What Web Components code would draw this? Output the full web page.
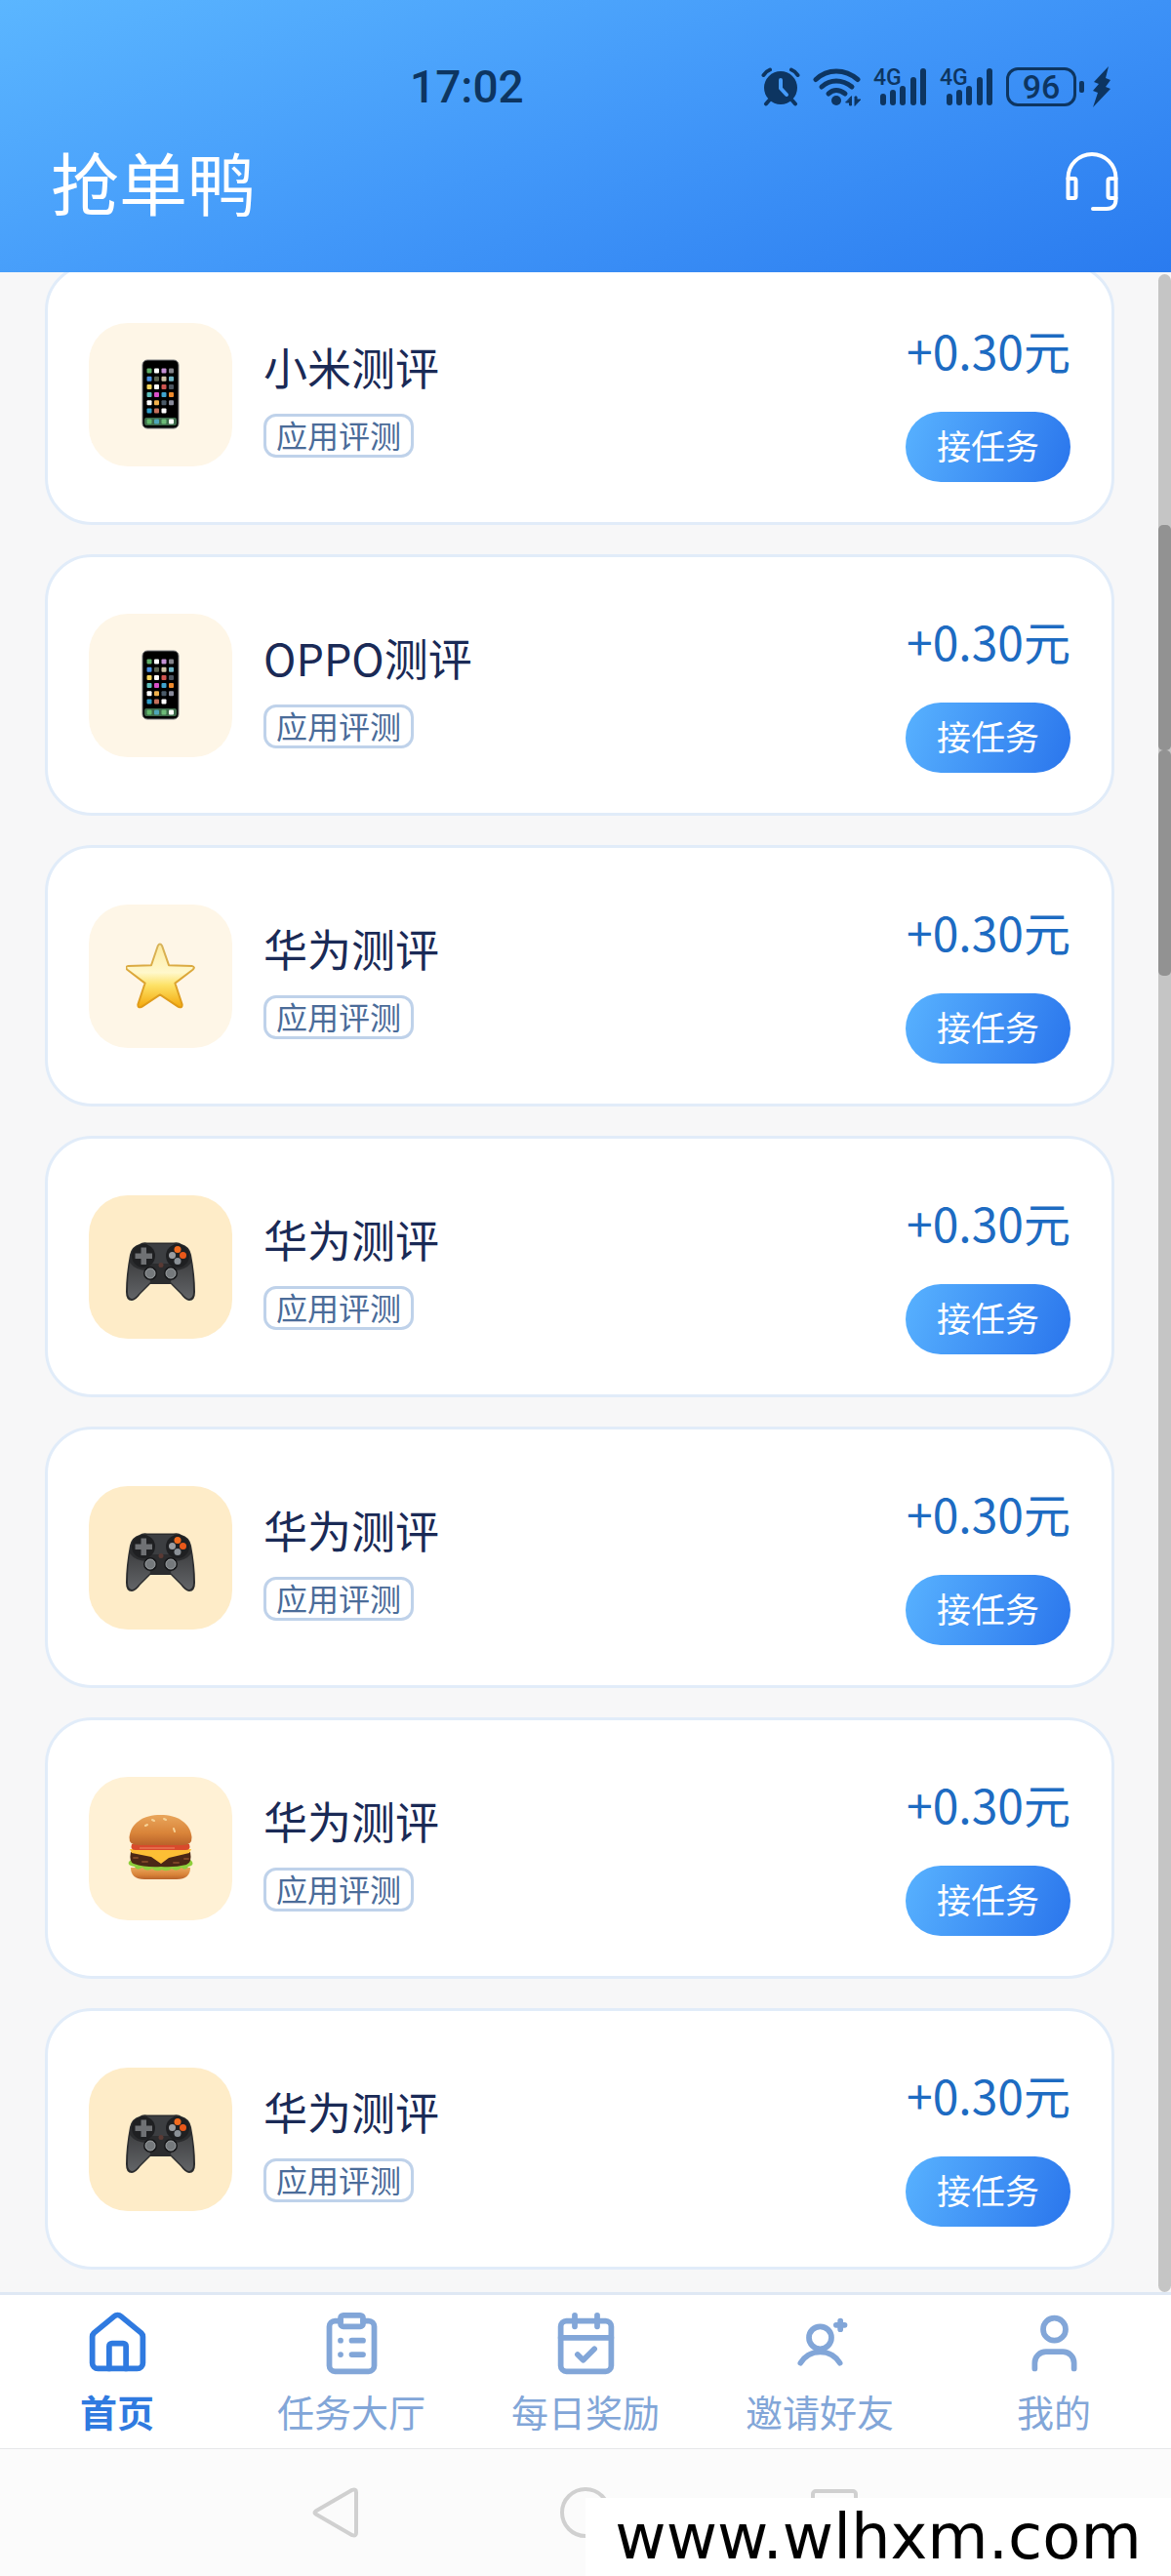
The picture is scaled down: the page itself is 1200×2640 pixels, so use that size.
<!DOCTYPE html>
<html lang="zh-CN">
<head>
<meta charset="utf-8">
<meta name="viewport" content="width=device-width, initial-scale=1">
<title>抢单鸭</title>
<style>
    body{
        margin: 0;
        background: #f7f7f8;
        font-family: "Noto Sans CJK SC", "Noto Sans", sans-serif;
    }
</style>
</head>
<body>

<task-app>
    <app-header slot="header" name="抢单鸭" time="17:02" battery="96"></app-header>

    <task-card name="小米测评" tag="应用评测" price="+0.30元" icon="phone"></task-card>
    <task-card name="OPPO测评" tag="应用评测" price="+0.30元" icon="phone"></task-card>
    <task-card name="华为测评" tag="应用评测" price="+0.30元" icon="star"></task-card>
    <task-card name="华为测评" tag="应用评测" price="+0.30元" icon="gamepad"></task-card>
    <task-card name="华为测评" tag="应用评测" price="+0.30元" icon="gamepad"></task-card>
    <task-card name="华为测评" tag="应用评测" price="+0.30元" icon="burger"></task-card>
    <task-card name="华为测评" tag="应用评测" price="+0.30元" icon="gamepad"></task-card>

    <tab-bar slot="footer">
        <tab-item icon="home" active>首页</tab-item>
        <tab-item icon="tasks">任务大厅</tab-item>
        <tab-item icon="calendar">每日奖励</tab-item>
        <tab-item icon="invite">邀请好友</tab-item>
        <tab-item icon="user">我的</tab-item>
    </tab-bar>
    <system-nav slot="footer">www.wlhxm.com</system-nav>
</task-app>

<script>
// home screen of the phone, 4 columns of small app squares and a dock
const phoneApps = [
    ['#5fae68', '#ffffff', '#c490d4', '#84848c'],
    ['#4a8fe0', '#5c6450', '#cfc4a8', '#6fb4c4'],
    ['#f4d35a', '#ffffff', '#cf5550', '#4c5560'],
    ['#5fc0bc', '#d94fc8', '#3fa4d0', '#ee8a2c'],
    ['#ffffff', '#f0b04c', '#4a5a68', '#8a8c9c'],
    ['#2f9cc8', '#c4705c', '#ffffff'],
];

const phoneSquares = phoneApps.map((row, r) => row.map((color, c) =>
    `<rect x="${21.5 + c * 7.5}" y="${9.5 + r * 8.2}" width="5" height="5" rx="1" fill="${color}"/>`
).join('')).join('');

const PICTURES = {
    phone: {
        background: '#fef6e7',
        svg: `
            <rect x="17" y="1" width="37" height="70" rx="5" fill="#000" stroke="#77787c" stroke-width="1"/>
            ${phoneSquares}
            <rect x="19" y="60" width="33" height="8" rx="2" fill="#3d6a4a"/>
            <rect x="21.5" y="61.5" width="5" height="5" rx="1" fill="#63b96b"/>
            <rect x="29" y="61.5" width="5" height="5" rx="1" fill="#4ea6b8"/>
            <rect x="36.5" y="61.5" width="5" height="5" rx="1" fill="#6cbb78"/>
            <rect x="44" y="61.5" width="5" height="5" rx="1" fill="#fff"/>`
    },
    star: {
        background: '#fef6e7',
        svg: `
            <defs>
                <linearGradient id="gold" x1="0" y1="0" x2="0" y2="1">
                    <stop offset="0" stop-color="#fdeaa0"/>
                    <stop offset=".45" stop-color="#fff8cc"/>
                    <stop offset=".65" stop-color="#fde267"/>
                    <stop offset="1" stop-color="#f4a90c"/>
                </linearGradient>
                <linearGradient id="rim" x1="0" y1="0" x2="0" y2="1">
                    <stop offset="0" stop-color="#d8b45c"/>
                    <stop offset="1" stop-color="#e09a14"/>
                </linearGradient>
            </defs>
            <path d="M32.8 5.2Q35 1.8 37 5.2L44 25.2L67.6 25.9Q71.6 27 68.6 29.8L50.4 43.6L57.6 65.4Q58 69.6 53.8 67.8L35 55.4L16.2 67.8Q12 69.6 12.4 65.4L19.6 43.6L1.4 29.8Q-1.6 27 2.4 25.9L26 25.2Z"
                fill="url(#gold)" stroke="url(#rim)" stroke-width="2" stroke-linejoin="round"/>`
    },
    gamepad: {
        background: '#feecc8',
        svg: `
            <defs>
                <linearGradient id="grip" x1="0" y1="0" x2="0" y2="1">
                    <stop offset="0" stop-color="#3f4042"/>
                    <stop offset="1" stop-color="#626467"/>
                </linearGradient>
            </defs>
            <path d="M14 13Q17 10.500 22 11.500H49Q54 10.500 57 13Q65 15 67 24Q71 45 71 62Q71 71 65 71Q61 71 56 64L46 54H25L15 64Q10 71 6 71Q0 71 0 62Q0 45 4 24Q6 15 14 13Z" fill="#2b2c2e"/>
            <path d="M4 32Q10 40 22 40L25 52L13 64Q9 69 6 69Q2 68 2 62Q2 44 4 32Z" fill="url(#grip)"/>
            <path d="M67 32Q61 40 49 40L46 52L58 64Q62 69 65 69Q69 68 69 62Q69 44 67 32Z" fill="url(#grip)"/>
            <path d="M22 13H49L45 33H26Z" fill="#3c3e41"/>
            <circle cx="18" cy="25" r="12" fill="#1f2022"/>
            <circle cx="53" cy="25" r="12" fill="#1f2022"/>
            <path d="M15.500 16.500h5.500v6h6v5.500h-6v6h-5.500v-6h-6v-5.500h6z" fill="#6f7174"/>
            <circle cx="53" cy="18.500" r="3.500" fill="#f26a1d"/>
            <circle cx="58.500" cy="24.500" r="3.500" fill="#e9581a"/>
            <circle cx="47.500" cy="24.500" r="3.500" fill="#9a9ca0"/>
            <circle cx="53" cy="30.500" r="3.500" fill="#8b9197"/>
            <circle cx="36" cy="34.500" r="2.500" fill="#5a3a34"/>
            <circle cx="25" cy="43" r="7" fill="#17181a"/>
            <circle cx="25" cy="43" r="5" fill="#75797c" stroke="#9ea2a4"/>
            <circle cx="46" cy="43" r="7" fill="#17181a"/>
            <circle cx="46" cy="43" r="5" fill="#75797c" stroke="#9ea2a4"/>`
    },
    burger: {
        background: '#fff1d5',
        svg: `
            <defs>
                <linearGradient id="bun" x1="0" y1="0" x2="0" y2="1">
                    <stop offset="0" stop-color="#e9a65c"/>
                    <stop offset=".6" stop-color="#d98439"/>
                    <stop offset="1" stop-color="#b9622a"/>
                </linearGradient>
            </defs>
            <path d="M5 56H66Q66 68 52 68H19Q5 68 5 56Z" fill="url(#bun)"/>
            <path d="M3 50Q6 46 12 49H60Q66 46 68 50Q70 54 64 55Q61 60 57 56Q52 61 47 57Q42 61 37 58Q31 61 27 57Q21 61 17 56Q11 60 9 55Q1 54 3 50Z" fill="#8fcf3c"/>
            <path d="M5 40H66Q68 51 62 53Q50 56 36 55Q20 56 8 52Q3 50 5 40Z" fill="#4a2716"/>
            <path d="M8 46h4m5 4h5m27 1h5m6-4h4" stroke="#7b4526" stroke-width="2" stroke-linecap="round"/>
            <path d="M4 37H67L65 41L44 46L36 52L26 45L6 41Z" fill="#fcbf35"/>
            <path d="M6 32H65Q67 38 61 38H10Q4 38 6 32Z" fill="#d94a2c"/>
            <path d="M14 36H50" stroke="#ef8a68" stroke-width="1"/>
            <path d="M3.500 25C5 10 18 2 35.500 2S66 10 67.500 25Q68 33 58 33H13Q3 33 3.500 25Z" fill="url(#bun)"/>
            <path d="M27 7l2 1m10-2l2 1m-21 6l2-1m27 4l1 3" stroke="#f6d296" stroke-width="2" stroke-linecap="round"/>`
    }
};

const TAB_ICONS = {
    home: `
        <path d="M3 9.700a2 2 0 0 1 .6-1.400l7.200-5.900a1.800 1.800 0 0 1 2.400 0l7.200 5.900a2 2 0 0 1 .6 1.400V19a2 2 0 0 1-2 2H5a2 2 0 0 1-2-2z"/>
        <path d="M9 21v-8a1 1 0 0 1 1-1h4a1 1 0 0 1 1 1v8"/>`,
    tasks: `
        <rect x="8" y="2" width="8" height="4" rx="1"/>
        <path d="M16 4h2a2 2 0 0 1 2 2v14a2 2 0 0 1-2 2H6a2 2 0 0 1-2-2V6a2 2 0 0 1 2-2h2"/>
        <path d="M12 11h4M12 16h4M8 11h.01M8 16h.01"/>`,
    calendar: `
        <rect x="3" y="4" width="18" height="18" rx="2"/>
        <path d="M8 2v4M16 2v4M3 10h18M9 16l2 2 4-4"/>`,
    invite: `
        <circle cx="12" cy="10" r="4"/>
        <path d="M5 19a8.200 8.200 0 0 1 14 0"/>
        <path d="M19.200 4v3M17.700 5.500h3"/>`,
    user: `
        <circle cx="12" cy="7" r="4"/>
        <path d="M19 21v-2a4 4 0 0 0-4-4H9a4 4 0 0 0-4 4v2"/>`
};

// ----------------------------------------------------------

class TaskApp extends HTMLElement{

    constructor(){
        super();
        this.attachShadow({mode: 'open'});
    }

    connectedCallback(){
        this.render();
    }

    render(){
        this.shadowRoot.innerHTML = `
            <style>
                :host{
                    display: flex;
                    flex-direction: column;
                    min-height: 100vh;
                }
                .content{
                    flex: 1;
                    display: flex;
                    overflow: hidden;
                }
                main{
                    flex: 1;
                    display: flex;
                    flex-direction: column;
                    gap: 30px;
                    /* the list is scrolled a little under the header */
                    margin-top: -9px;
                    padding: 0 45px 23px 46px;
                }
                .scrollbar{
                    width: 13px;
                    box-sizing: border-box;
                    margin-top: 2px;
                    padding-top: 257px;
                    border-radius: 7px;
                    background: #c5c5c5;
                }
                .thumb{
                    height: 231px;
                    border-radius: 5px;
                    background: #929292;
                }
            </style>
            <slot name="header"></slot>
            <div class="content">
                <main><slot></slot></main>
                <div class="scrollbar">
                    <div class="thumb"></div>
                    <div class="thumb"></div>
                </div>
            </div>
            <slot name="footer"></slot>
        `;
    }
}

// TASK APP
window.customElements.define('task-app', TaskApp);

// ----------------------------------------------------------

class SignalMeter extends HTMLElement{

    constructor(){
        super();
        this.attachShadow({mode: 'open'});
    }

    connectedCallback(){
        this.render();
    }

    render(){
        this.shadowRoot.innerHTML = `
            <style>
                :host{
                    display: block;
                }
                svg{
                    display: block;
                    overflow: visible;
                }
                text{
                    font: 500 23px Roboto, sans-serif;
                }
            </style>
            <svg width="55" height="56" viewBox="0 -8 55 56" fill="currentColor">
                <text x="0" y="18">4G</text>
                <rect x="7" y="27" width="6" height="12" rx="3"/>
                <rect x="17" y="23" width="6" height="16" rx="3"/>
                <rect x="27" y="19" width="6" height="20" rx="3"/>
                <rect x="38" y="10" width="6" height="29" rx="3"/>
                <rect x="48" y="1" width="6" height="38" rx="3"/>
            </svg>
        `;
    }
}

// SIGNAL METER
window.customElements.define('signal-meter', SignalMeter);

// ----------------------------------------------------------

class AppHeader extends HTMLElement{

    constructor(){
        super();
        this.attachShadow({mode: 'open'});
    }

    connectedCallback(){
        const name = this.getAttribute('name');
        const time = this.getAttribute('time');
        const battery = this.getAttribute('battery');

        this.render(name, time, battery);
    }

    render(name, time, battery){
        this.shadowRoot.innerHTML = `
            <style>
                :host{
                    display: flex;
                    flex-direction: column;
                    gap: 20px;
                    padding: 61px 0 44px;
                    background: linear-gradient(160deg, #5bb6ff 0%, #4298f9 50%, #2a7bef 100%);
                }
                svg{
                    display: block;
                }
                .status{
                    display: flex;
                    align-items: center;
                    justify-content: space-between;
                    height: 56px;
                    padding: 0 62px 0 35%;
                    color: #0d3561;
                    font-family: Roboto, sans-serif;
                    font-weight: 500;
                }
                time{
                    font-size: 46px;
                    line-height: 56px;
                }
                .icons{
                    display: flex;
                    align-items: center;
                    gap: 13px;
                }
                .battery{
                    display: flex;
                    align-items: center;
                    gap: 3px;
                }
                .level{
                    box-sizing: border-box;
                    width: 72px;
                    height: 40px;
                    border: 3px solid;
                    border-radius: 12px;
                    font-size: 34px;
                    line-height: 35px;
                    text-align: center;
                }
                .title{
                    display: flex;
                    align-items: center;
                    justify-content: space-between;
                    padding: 0 54px 0 52px;
                    color: #fff;
                }
                h1{
                    margin: 0;
                    font-size: 70px;
                    font-weight: 400;
                    line-height: 98px;
                }
                button{
                    padding: 0;
                    border: 0;
                    background: none;
                    color: inherit;
                }
            </style>
            <div class="status">
                <time>${time}</time>
                <div class="icons">
                    <svg width="40" height="40" viewBox="0 0 40 40" fill="none" stroke="currentColor" stroke-width="4" stroke-linecap="round">
                        <path d="M2.500 8Q5 4 9 2.500M37.500 8Q35 4 31 2.500" stroke-width="4"/>
                        <path d="M8 34L5 37.500M32 34L35 37.500"/>
                        <circle cx="20" cy="21" r="17" fill="currentColor" stroke="none"/>
                        <path d="M20 13V21.500L26 28" stroke="#459bfa" stroke-linejoin="round"/>
                    </svg>
                    <svg width="49" height="40" viewBox="0 0 49 40" fill="none" stroke="currentColor" stroke-width="5" stroke-linecap="round">
                        <path d="M3 12.500Q12 4 24 4T46 12.500"/>
                        <path d="M9 20Q15.500 14 24 14T40 20"/>
                        <path d="M16 27Q19.500 23.500 24 23.500T33 27"/>
                        <circle cx="24" cy="34" r="5" fill="currentColor" stroke="none"/>
                        <path d="M39.500 30V39H37.500V36H34ZM43 39V30H45V33H48.500Z" fill="currentColor" stroke-width="1" stroke-linejoin="round"/>
                    </svg>
                    <signal-meter></signal-meter>
                    <signal-meter></signal-meter>
                    <div class="battery">
                        <div class="level">${battery}</div>
                        <svg width="32" height="42" viewBox="0 0 32 42" fill="currentColor">
                            <rect x="0" y="15" width="5" height="12" rx="2"/>
                            <path d="M30 0L15 16L20 18L14 25L19 27L14 42L32 23L27 21L32 14L27 12Z"/>
                        </svg>
                    </div>
                </div>
            </div>
            <div class="title">
                <h1>${name}</h1>
                <button type="button" aria-label="客服">
                    <svg width="54" height="60" viewBox="0 0 54 60" fill="none" stroke="currentColor" stroke-width="4" stroke-linecap="round" stroke-linejoin="round">
                        <path d="M2.500 27V26.500A24.500 24.500 0 0 1 51.500 26.500V48Q51.500 58 42 58H28"/>
                        <path d="M2.500 27H9Q10.500 27 10.500 29V45Q10.500 47 9 47H2.500Z"/>
                        <path d="M51.500 27H46Q43.500 27 43.500 29V45Q43.500 47 46 47H51.500"/>
                    </svg>
                </button>
            </div>
        `;
    }
}

// APP HEADER
window.customElements.define('app-header', AppHeader);

// ----------------------------------------------------------

class TaskCard extends HTMLElement{

    constructor(){
        super();
        this.attachShadow({mode: 'open'});
    }

    connectedCallback(){
        const name = this.getAttribute('name');
        const tag = this.getAttribute('tag');
        const price = this.getAttribute('price');
        const picture = PICTURES[this.getAttribute('icon')];

        this.render(name, tag, price, picture);
    }

    render(name, tag, price, picture){
        this.shadowRoot.innerHTML = `
            <style>
                :host{
                    display: flex;
                    align-items: center;
                    gap: 32px;
                    padding: 41px 42px;
                    border: 3px solid #e1ecf9;
                    border-radius: 48px;
                    background: #fff;
                }
                .picture{
                    display: flex;
                    align-items: center;
                    justify-content: center;
                    width: 147px;
                    height: 147px;
                    border-radius: 40px;
                    background: ${picture.background};
                }
                .info{
                    flex: 1;
                    display: flex;
                    flex-direction: column;
                    align-items: flex-start;
                    gap: 12px;
                }
                h2{
                    margin: 0;
                    color: #1a2a56;
                    font-size: 45px;
                    font-weight: 400;
                    line-height: 72px;
                }
                .tag{
                    padding: 0 10px 3px;
                    border: 3px solid #bfd2ea;
                    border-radius: 13px;
                    color: #4b6c99;
                    font-size: 32px;
                    line-height: 36px;
                }
                .action{
                    display: flex;
                    flex-direction: column;
                    align-items: flex-end;
                    gap: 20px;
                }
                .price{
                    color: #1d6bc2;
                    font-size: 48px;
                    line-height: 88px;
                }
                button{
                    height: 72px;
                    padding: 0 32px 4px;
                    border: 0;
                    border-radius: 36px;
                    background: linear-gradient(110deg, #58b2ff, #2a75ec);
                    color: #fff;
                    font-family: inherit;
                    font-size: 35px;
                    line-height: 68px;
                }
            </style>
            <div class="picture">
                <svg width="72" height="72" viewBox="0 0 72 72">${picture.svg}</svg>
            </div>
            <div class="info">
                <h2>${name}</h2>
                <span class="tag">${tag}</span>
            </div>
            <div class="action">
                <span class="price">${price}</span>
                <button type="button">接任务</button>
            </div>
        `;
    }
}

// TASK CARD
window.customElements.define('task-card', TaskCard);

// ----------------------------------------------------------

class TabBar extends HTMLElement{

    constructor(){
        super();
        this.attachShadow({mode: 'open'});
    }

    connectedCallback(){
        this.render();
    }

    render(){
        this.shadowRoot.innerHTML = `
            <style>
                :host{
                    display: block;
                    border-top: 3px solid #dfe8f4;
                    background: #fff;
                }
                nav{
                    display: flex;
                }
            </style>
            <nav><slot></slot></nav>
        `;
    }
}

// TAB BAR
window.customElements.define('tab-bar', TabBar);

// ----------------------------------------------------------

class TabItem extends HTMLElement{

    constructor(){
        super();
        this.attachShadow({mode: 'open'});
    }

    connectedCallback(){
        const icon = this.getAttribute('icon');

        this.render(icon);
    }

    render(icon){
        this.shadowRoot.innerHTML = `
            <style>
                :host{
                    flex: 1;
                    color: #82a6d8;
                }
                :host([active]){
                    color: #2f7ae0;
                    font-weight: 700;
                }
                a{
                    display: flex;
                    flex-direction: column;
                    align-items: center;
                    gap: 12px;
                    padding: 15px 0;
                    color: inherit;
                    font-size: 38px;
                    line-height: 46px;
                    text-decoration: none;
                }
            </style>
            <a href="#${icon}">
                <svg width="69" height="69" viewBox="0 0 24 24" fill="none" stroke="currentColor" stroke-width="2" stroke-linecap="round" stroke-linejoin="round">${TAB_ICONS[icon]}</svg>
                <span><slot></slot></span>
            </a>
        `;
    }
}

// TAB ITEM
window.customElements.define('tab-item', TabItem);

// ----------------------------------------------------------

class SystemNav extends HTMLElement{

    constructor(){
        super();
        this.attachShadow({mode: 'open'});
    }

    connectedCallback(){
        this.render();
    }

    render(){
        this.shadowRoot.innerHTML = `
            <style>
                :host{
                    display: block;
                    position: relative;
                    border-top: 1px solid #e6e7e9;
                    background: #fbfbfb;
                }
                .keys{
                    display: flex;
                    justify-content: center;
                    gap: 203px;
                    padding: 39px 0;
                }
                button{
                    padding: 0;
                    border: 0;
                    background: none;
                    color: #d0d0d0;
                }
                svg{
                    display: block;
                }
                /* site address lies over the keys */
                .site{
                    position: absolute;
                    right: 0;
                    bottom: 0;
                    width: 50%;
                    background: #fff;
                    color: #000;
                    font-family: "DejaVu Sans", sans-serif;
                    font-size: 64px;
                    line-height: 80px;
                    text-align: center;
                }
            </style>
            <div class="keys">
                <button type="button" aria-label="返回">
                    <svg width="52" height="52" viewBox="0 0 52 52" fill="none" stroke="currentColor" stroke-width="4" stroke-linejoin="round">
                        <path d="M4.500 24.500L42 2.800Q46 1.500 46 5V47Q46 50.500 42 49.200L4.500 27.500Q2.500 26 4.500 24.500Z"/>
                    </svg>
                </button>
                <button type="button" aria-label="主屏幕">
                    <svg width="52" height="52" viewBox="0 0 52 52" fill="none" stroke="currentColor" stroke-width="4">
                        <circle cx="26" cy="26" r="24"/>
                    </svg>
                </button>
                <button type="button" aria-label="最近任务">
                    <svg width="52" height="52" viewBox="0 0 52 52" fill="none" stroke="currentColor" stroke-width="4">
                        <rect x="4" y="4" width="44" height="44" rx="3"/>
                    </svg>
                </button>
            </div>
            <div class="site"><slot></slot></div>
        `;
    }
}

// SYSTEM NAV
window.customElements.define('system-nav', SystemNav);
</script>
</body>
</html>
